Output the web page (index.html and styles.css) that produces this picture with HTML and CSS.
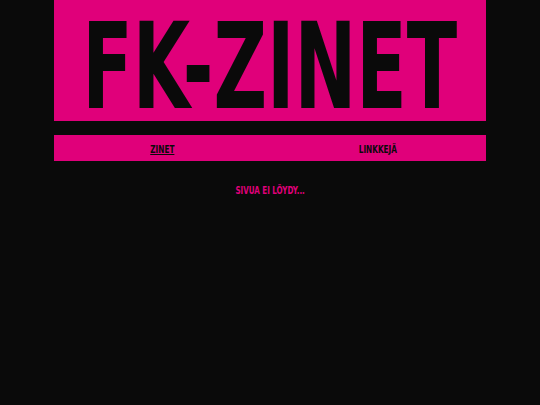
FILE: index.html
```html
<!DOCTYPE html>
<html lang="fi">
<head>
<meta charset="utf-8">
<title>FK-ZINET</title>
<link rel="stylesheet" href="styles.css">
</head>
<body>
<div class="page">
  <header class="banner"><h1 class="logo">FK-ZINET</h1></header>
  <nav class="nav">
    <a class="nav-link current" href="#">ZINET</a>
    <a class="nav-link" href="#">LINKKEJÄ</a>
  </nav>
  <p class="notice"><span class="notice-text">SIVUA EI LÖYDY...</span></p>
</div>
</body>
</html>
```
FILE: styles.css
```css
html, body {
  margin: 0;
  padding: 0;
  background: #0a0a0a;
}
body {
  font-family: "DejaVu Sans Condensed", "Liberation Sans", sans-serif;
}
.page {
  width: 432px;
  margin: 0 auto;
  display: flex;
  flex-direction: column;
}
.banner {
  background: #e0007a;
  height: 121px;
  box-sizing: border-box;
  padding-top: 15px;
  display: flex;
  justify-content: center;
  align-items: center;
}
.logo {
  margin: 0;
  font-size: 119px;
  font-weight: 700;
  line-height: 0.85;
  color: #0a0a0a;
  transform: scaleX(0.69);
  white-space: nowrap;
}
.nav {
  margin-top: 14px;
  height: 26px;
  background: #e0007a;
  display: grid;
  grid-template-columns: 1fr 1fr;
  align-items: center;
}
.nav-link {
  display: inline-block;
  justify-self: center;
  color: #0a0a0a;
  font-size: 11px;
  font-weight: 700;
  text-decoration: none;
  transform: scaleX(0.74);
  padding-top: 2px;
}
.nav-link.current {
  text-decoration: underline;
}
.notice {
  margin: 23px 0 0;
  text-align: center;
  color: #e0007a;
  font-size: 11px;
  font-weight: 700;
}
.notice-text {
  display: inline-block;
  transform: scaleX(0.72);
}
```
